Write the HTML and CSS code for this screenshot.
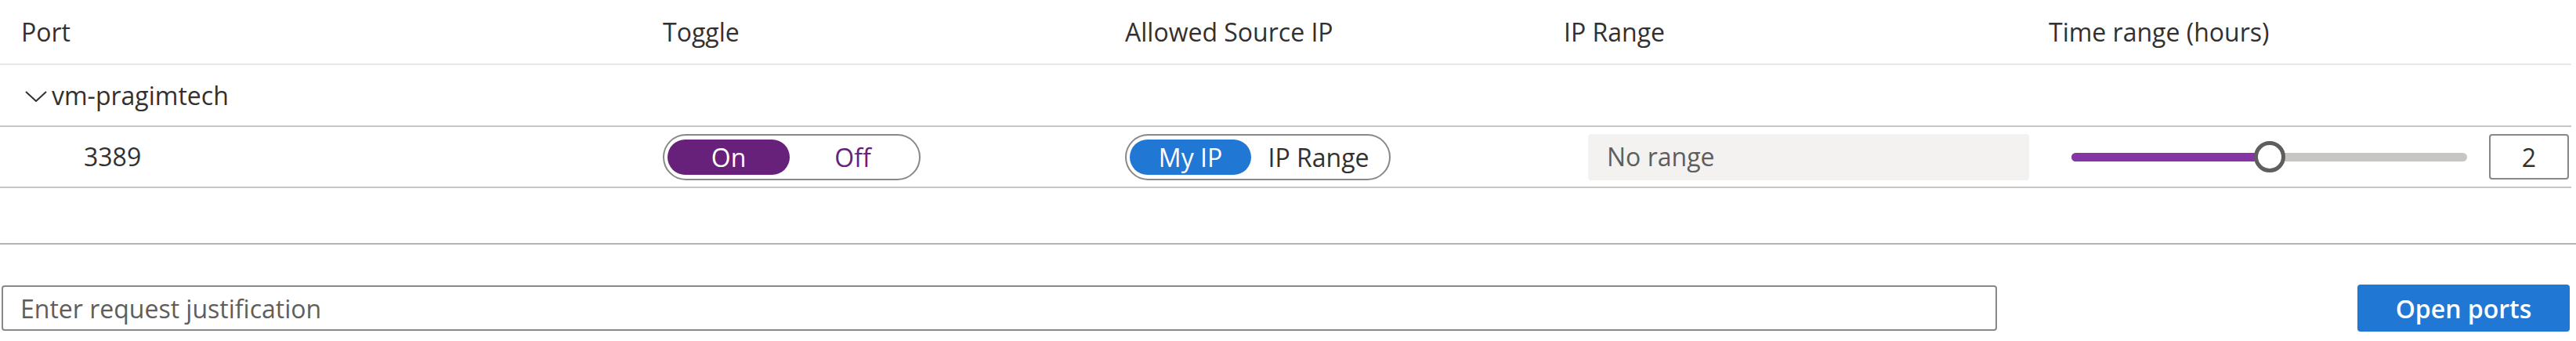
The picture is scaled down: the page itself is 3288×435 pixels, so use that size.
FILE: index.html
```html
<!DOCTYPE html>
<html lang="en">
<head>
<meta charset="utf-8">
<title>Request access</title>
<link rel="stylesheet" href="styles.css">
</head>
<body>
<div class="page">
  <div class="table">
    <div class="row head">
      <div class="cell c-port">Port</div>
      <div class="cell">Toggle</div>
      <div class="cell">Allowed Source IP</div>
      <div class="cell">IP Range</div>
      <div class="cell">Time range (hours)</div>
    </div>
    <div class="row group">
      <div class="group-cell">
        <svg class="chev" width="28" height="14" viewBox="0 0 28 14" aria-hidden="true"><path d="M1 1 L14 13 L27 1" fill="none" stroke="#323130" stroke-width="2"/></svg>
        <span>vm-pragimtech</span>
      </div>
    </div>
    <div class="row data">
      <div class="cell c-num">3389</div>
      <div class="cell">
        <div class="seg seg-purple">
          <span class="opt opt-on active">On</span>
          <span class="opt opt-off">Off</span>
        </div>
      </div>
      <div class="cell">
        <div class="seg seg-blue">
          <span class="opt opt-my active">My IP</span>
          <span class="opt opt-range">IP Range</span>
        </div>
      </div>
      <div class="cell c-range">
        <div class="range-box">No range</div>
      </div>
      <div class="cell c-time">
        <div class="slider">
          <div class="track"><div class="fill" style="width:50%"></div></div>
          <div class="thumb" style="left:50%"></div>
        </div>
        <div class="num">2</div>
      </div>
    </div>
  </div>
  <div class="divider"></div>
  <div class="footer">
    <div class="justify">Enter request justification</div>
    <button class="btn">Open ports</button>
  </div>
</div>
</body>
</html>
```
FILE: styles.css
```css
* { box-sizing: border-box; }
html, body { margin: 0; padding: 0; background: #ffffff; }
body {
  font-family: "Open Sans", "Noto Sans", sans-serif;
  font-size: 32px;
  color: #323130;
  width: 3288px;
  height: 435px;
  overflow: hidden;
}
.page { width: 3288px; }
.table { padding-right: 6px; }
.row {
  display: grid;
  grid-template-columns: 846px 590px 560px 619px 1fr;
  align-items: center;
  border-bottom: 2px solid #c8c6c4;
}
.head { height: 83px; border-bottom-color: #e8e8e8; }
.head .c-port { padding-left: 27px; }
.group { height: 79px; display: flex; }
.group-cell { display: flex; align-items: center; padding-left: 32px; gap: 6px; }
.chev { display: block; margin-top: 2px; }
.data { height: 78px; }
.cell { white-space: nowrap; display: flex; align-items: center; }
.c-num { padding-left: 107px; margin-top: -2px; }

.seg {
  display: inline-flex;
  align-items: center;
  height: 59px;
  padding: 0 4px;
  border: 2px solid #8a8886;
  border-radius: 30px;
}
.opt {
  height: 45px;
  display: flex;
  align-items: center;
  justify-content: center;
  border-radius: 23px;
}
.opt-on { width: 156px; }
.opt-off { width: 161px; }
.opt-my { width: 155px; }
.opt-range { width: 172px; }
.seg-purple .opt { color: #68217a; }
.seg-purple .opt.active { background: #68217a; color: #ffffff; }
.seg-blue .opt { color: #323130; }
.seg-blue .opt.active { background: #2078d4; color: #ffffff; }

.c-range { padding-left: 31px; }
.range-box {
  width: 563px;
  height: 59px;
  background: #f3f2f1;
  border-radius: 4px;
  padding-left: 24px;
  padding-bottom: 2px;
  display: flex;
  align-items: center;
  color: #605e5c;
}

.c-time { padding-left: 29px; gap: 28px; }
.slider { position: relative; width: 505px; height: 42px; display: flex; align-items: center; }
.track { width: 100%; height: 11px; background: #c8c6c4; border-radius: 6px; overflow: hidden; }
.fill { height: 100%; background: #8436a4; }
.thumb {
  position: absolute;
  top: 1px;
  width: 40px;
  height: 40px;
  margin-left: -20px;
  border: 5px solid #605e5c;
  border-radius: 50%;
  background: #ffffff;
}
.num {
  width: 102px;
  height: 58px;
  border: 2px solid #8a8886;
  border-radius: 4px;
  display: flex;
  align-items: center;
  justify-content: center;
}

.divider { margin-top: 70px; height: 2px; background: #b3b3b3; }
.footer {
  display: flex;
  align-items: center;
  justify-content: space-between;
  margin-top: 51px;
  padding: 0 8px 0 2px;
}
.justify {
  width: 2547px;
  height: 58px;
  border: 2px solid #8a8886;
  border-radius: 4px;
  padding-left: 22px;
  display: flex;
  align-items: center;
  color: #605e5c;
}
.btn {
  width: 271px;
  height: 60px;
  border: none;
  border-radius: 4px;
  background: #2078d4;
  color: #ffffff;
  font-family: inherit;
  font-size: 32px;
  font-weight: 600;
}
```
